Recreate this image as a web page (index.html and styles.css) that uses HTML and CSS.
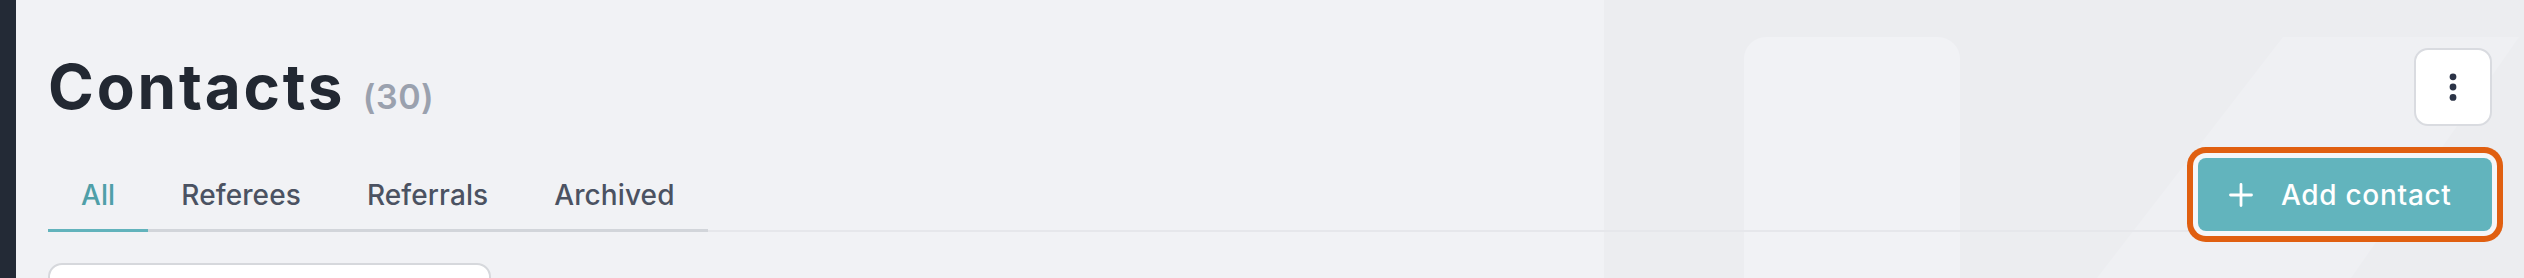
FILE: index.html
```html
<!DOCTYPE html>
<html lang="en">
<head>
<meta charset="utf-8">
<title>Contacts</title>
<link rel="stylesheet" href="styles.css">
</head>
<body>
  <aside class="sidebar"></aside>
  <main class="main">
    <div class="deco" aria-hidden="true">
      <div class="deco-zone"></div>
      <div class="deco-card"></div>
      <div class="deco-slash"></div>
    </div>
    <div class="content">
      <header class="top-row">
        <h1 class="title">Contacts <span class="count">(30)</span></h1>
        <button class="more-btn" type="button" aria-label="More options">
          <svg width="8" height="28" viewBox="0 0 8 28"><circle cx="4" cy="3.8" r="3.4" fill="#2b3346"/><circle cx="4" cy="14" r="3.4" fill="#2b3346"/><circle cx="4" cy="24.4" r="3.4" fill="#2b3346"/></svg>
        </button>
      </header>
      <div class="tab-row">
        <nav class="tabs">
          <a class="tab active">All</a>
          <a class="tab">Referees</a>
          <a class="tab">Referrals</a>
          <a class="tab">Archived</a>
        </nav>
        <button class="add-btn" type="button">
          <svg width="24" height="24" viewBox="0 0 24 24"><path d="M12 1.5V22.5M1.5 12H22.5" stroke="#fff" stroke-width="2.8" stroke-linecap="round" fill="none"/></svg>
          <span>Add contact</span>
        </button>
      </div>
      <div class="search-box"></div>
    </div>
  </main>
</body>
</html>
```
FILE: styles.css
```css
* { box-sizing: border-box; }
html, body { margin: 0; padding: 0; }
body {
  display: flex;
  width: 2524px;
  height: 278px;
  overflow: hidden;
  font-family: Inter, "Noto Sans", "Liberation Sans", sans-serif;
  background: #f1f2f5;
}
.sidebar {
  width: 16px;
  flex: 0 0 16px;
  background: #232a36;
}
.main {
  position: relative;
  flex: 1;
  overflow: hidden;
  background: #f1f2f5;
}
.deco { position: absolute; inset: 0; z-index: 0; }
.deco-zone {
  position: absolute; top: 0; bottom: 0; left: 1588px; right: 0;
  background: #ecedf0;
}
.deco-card {
  position: absolute; top: 37px; left: 1728px; width: 216px; height: 300px;
  background: #f1f2f5;
  border-radius: 22px;
}
.deco-slash {
  position: absolute; top: 37px; left: 2081px; width: 422px; height: 241px;
  background: #eff0f3;
  clip-path: polygon(186px 0, 422px 0, 254px 241px, 0 241px);
}
.content {
  position: relative;
  z-index: 1;
  padding: 48px 32px 0 32px;
}
.top-row {
  display: flex;
  justify-content: space-between;
  align-items: center;
  height: 78px;
}
.title {
  margin: 0;
  font-size: 62px;
  line-height: 78px;
  height: 78px;
  font-weight: 700;
  color: #222832;
  letter-spacing: 2.8px;
}
.count {
  font-size: 34px;
  line-height: 1;
  font-weight: 600;
  color: #9aa1ae;
  margin-left: 0;
  letter-spacing: 0.5px;
}
.more-btn {
  width: 78px;
  height: 78px;
  background: #fff;
  border: 2px solid #d9dbe0;
  border-radius: 14px;
  display: flex;
  align-items: center;
  justify-content: center;
  padding: 0;
}
.tab-row {
  margin-top: 32px;
  height: 74px;
  display: flex;
  justify-content: space-between;
  align-items: flex-start;
  box-shadow: inset 0 -2px 0 #e6e7eb;
}
.tabs {
  align-self: flex-end;
  display: flex;
  box-shadow: inset 0 -3px 0 #d2d5da;
}
.tab {
  padding: 0 33px 17px;
  font-size: 28px;
  line-height: 40px;
  font-weight: 500;
  color: #4b5262;
  letter-spacing: 0.1px;
}
.tab.active {
  color: #4f9fa8;
  box-shadow: inset 0 -3px 0 #62b3bc;
}
.add-btn {
  height: 73px;
  width: 294px;
  display: flex;
  align-items: center;
  gap: 28px;
  padding: 0 0 0 31px;
  background: #62b4bd;
  border: none;
  border-radius: 8px;
  color: #fff;
  font-family: inherit;
  font-size: 28px;
  font-weight: 500;
  letter-spacing: 0.7px;
  box-shadow: 0 0 0 5px #f5f6f8, 0 0 0 11px #e05f10;
}
.search-box {
  margin-top: 31px;
  width: 443px;
  height: 60px;
  background: #fff;
  border: 2px solid #d6d8dc;
  border-radius: 14px;
}
```
